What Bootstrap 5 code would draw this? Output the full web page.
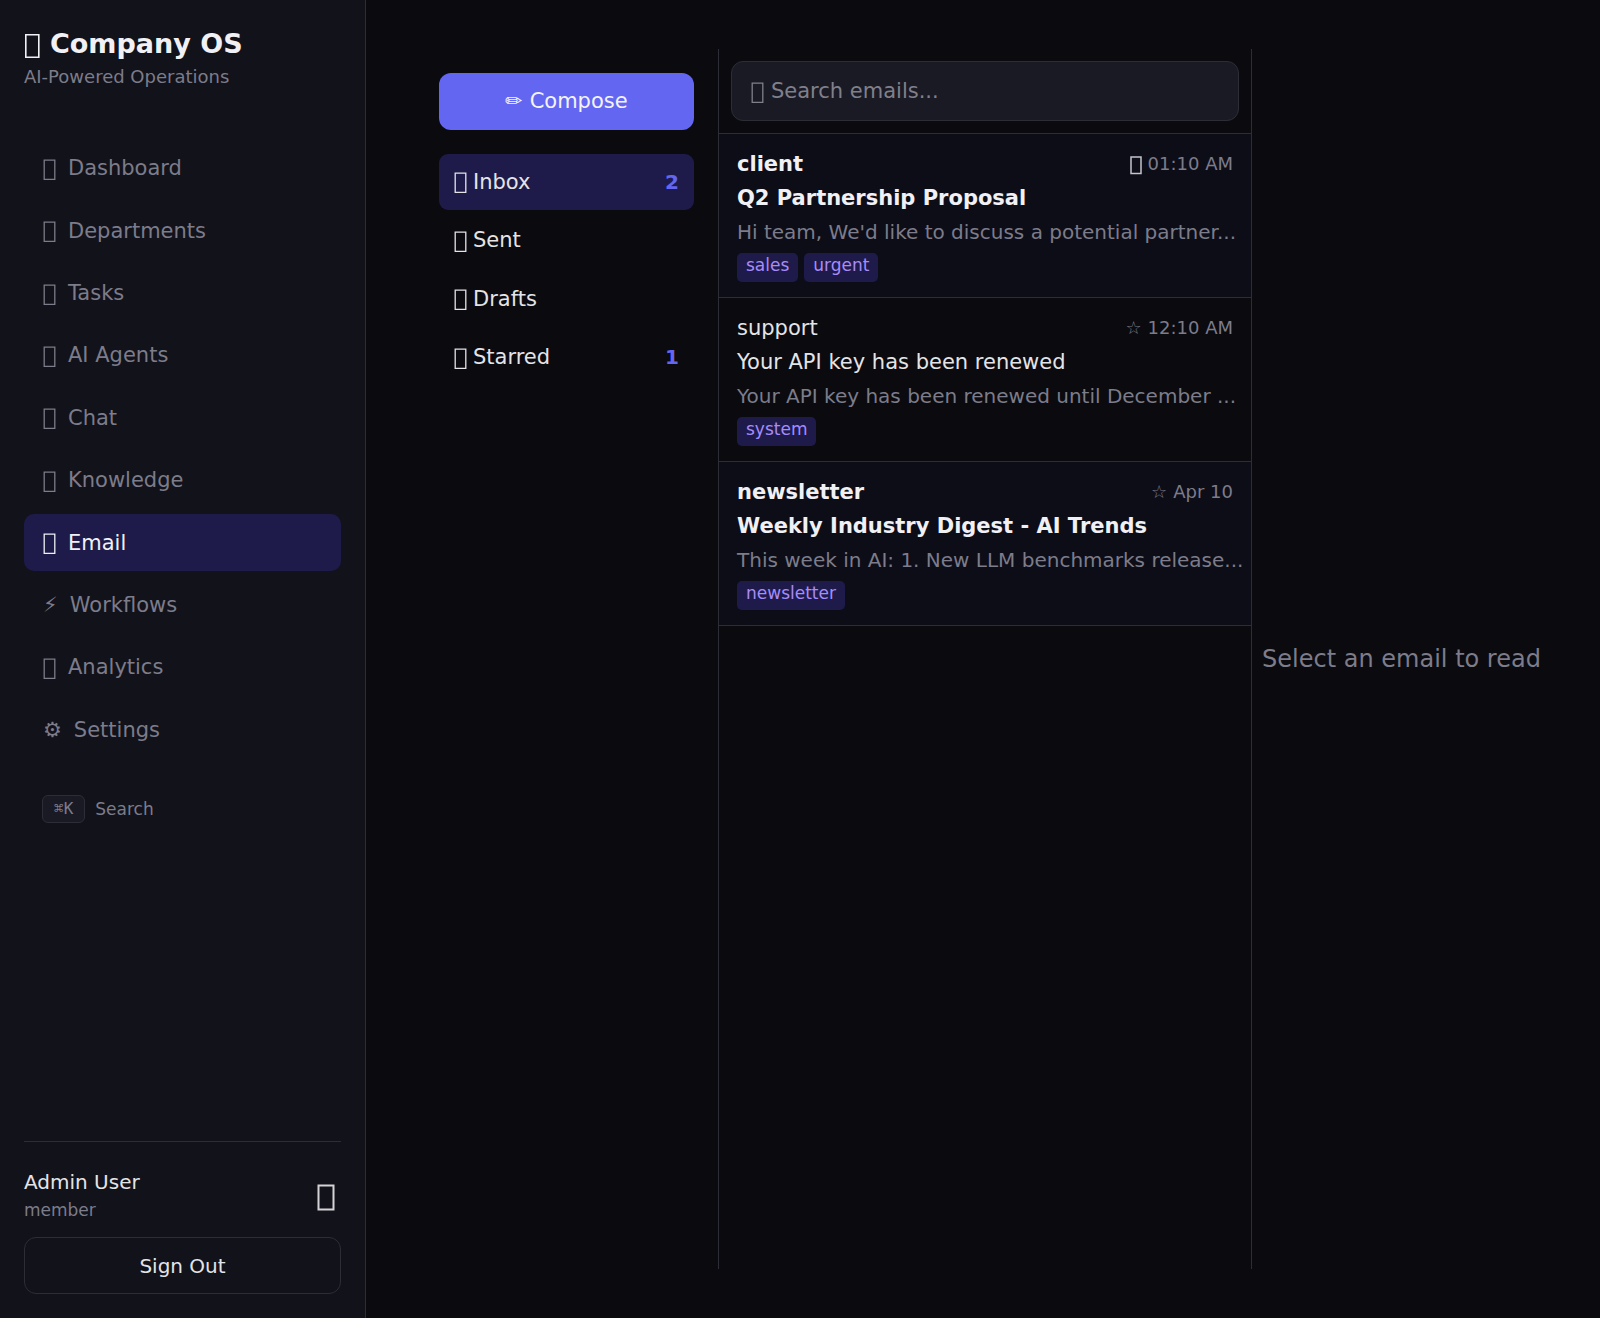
<!DOCTYPE html>
<html lang="en" data-bs-theme="dark">
<head>
<meta charset="utf-8">
<meta name="viewport" content="width=device-width, initial-scale=1">
<title>Company OS – Email</title>
<link href="https://cdn.jsdelivr.net/npm/bootstrap@5.3.0/dist/css/bootstrap.min.css" rel="stylesheet">
<style>
:root {
  --os-bg: #0a0a0f; --os-panel: #12121a; --os-field: #1a1a25; --os-line: #2d2d37;
  --os-text: #e4e4e7; --os-muted: #7c7c8a; --os-accent: #6366f1; --os-active: #1e1b4b;
}
body { background: var(--os-bg); color: var(--os-text); font-family: "DejaVu Sans", sans-serif; font-size: 21px; line-height: 32px; }
a { color: inherit; text-decoration: none; }
.os-muted { color: var(--os-muted); }
.fs-17 { font-size: 17px; }
.fs-18 { font-size: 18px; }
.fs-20 { font-size: 20px; }

.side-panel { width: 366px; flex: none; background: var(--os-panel); border-right: 1px solid var(--os-line); padding: 24px; }
.brand-name { font-size: 27px; line-height: 40px; font-weight: 700; gap: 9px; margin: 0; color: #f0f0f5; }
.brand-tag { line-height: 26px; margin: 0 0 50px; }
.side-nav { gap: 6px; min-height: 618px; }
.side-link { padding: 0 19px; gap: 12px; border-radius: 10px; color: var(--os-muted); }
.side-link.active { background: var(--os-active); color: #f0f0f5; }
.shortcut { margin-top: 37px; padding: 0 18px; gap: 10px; font-size: 17px; line-height: 26px; color: var(--os-muted); background: none; border: 0; }
.shortcut kbd { font: 16px/26px "DejaVu Sans Mono", monospace; background: var(--os-field); color: inherit; border: 1px solid var(--os-line); border-radius: 6px; padding: 0 11px; }
.user-box { border-top: 1px solid var(--os-line); padding-top: 26px; }
.user-box p { line-height: 28px; margin: 0; }
.theme-btn { background: none; border: 0; padding: 0 6px; color: #d4d4d8; }
.btn-out { height: 57px; border: 1px solid var(--os-line); border-radius: 12px; color: var(--os-text); font-size: 20px; margin-top: 13px; }
.btn-out:hover { border-color: var(--os-accent); color: #fff; }

.tofu { flex: none; fill: none; stroke: currentColor; margin-top: 3px; }

.mail-area { padding: 49px; }
.folder-pane { width: 304px; flex: none; padding: 24px; border-right: 1px solid var(--os-line); }
.btn-compose { height: 57px; border-radius: 12px; background: var(--os-accent); color: #f4f4f8; font-size: 21px; margin-bottom: 24px; }
.btn-compose:hover { background: #5558e6; color: #fff; }
.folder-list { gap: 3px; min-height: 231px; }
.folder-link { padding: 0 15px; gap: 6px; border-radius: 9px; }
.folder-link.active { background: var(--os-active); }
.folder-count { color: var(--os-accent); font-weight: 700; font-size: 20px; }

.list-pane { width: 533px; flex: none; border-right: 1px solid var(--os-line); }
.search-row { padding: 12px; border-bottom: 1px solid var(--os-line); }
.search-field { height: 60px; padding: 0 19px; gap: 7px; background: var(--os-field); border: 1px solid var(--os-line); border-radius: 12px; color: #80808a; }
.search-field input { background: none; border: 0; outline: 0; padding: 0; color: var(--os-text); }
.search-field input::placeholder { color: #80808a; opacity: 1; }
.mail-row { display: block; padding: 14px 18px 15px; border-bottom: 1px solid var(--os-line); }
.mail-row.unread { background: #0d0d18; }
.unread .mail-from, .unread .mail-subject { font-weight: 700; color: #f0f0f5; }
.mail-subject { line-height: 36px; }
.mail-time { gap: 6px; }
.mail-tags { gap: 6px; margin-top: 5px; }
.mail-tag { background: var(--os-active); color: #a78bfa; font-size: 17px; line-height: 25px; padding: 0 9px 4px; border-radius: 5px; }
.starred { color: #c4c4cc; }
.reader-pane { font-size: 24px; color: var(--os-muted); }
</style>
</head>
<body>
<svg width="0" height="0" class="position-absolute" aria-hidden="true">
  <symbol id="box" viewBox="0 0 13 22"><path d="M1.2 1.2h10.6v19.2H1.2z" stroke-width="1.3"/></symbol>
</svg>
<div class="d-flex min-vh-100">
  <aside class="side-panel d-flex flex-column">
    <h1 class="brand-name d-flex align-items-center"><svg class="tofu" width="17" height="26" viewBox="0 0 17 26"><path d="M1.8 1.8h13v22.4h-13z" stroke-width="1.6"/></svg>Company OS</h1>
    <p class="brand-tag fs-18 os-muted">AI-Powered Operations</p>
    <nav class="side-nav d-flex flex-column">
      <a href="#" class="side-link flex-fill d-flex align-items-center"><svg class="tofu" width="13" height="22"><use href="#box"/></svg>Dashboard</a>
      <a href="#" class="side-link flex-fill d-flex align-items-center"><svg class="tofu" width="13" height="22"><use href="#box"/></svg>Departments</a>
      <a href="#" class="side-link flex-fill d-flex align-items-center"><svg class="tofu" width="13" height="22"><use href="#box"/></svg>Tasks</a>
      <a href="#" class="side-link flex-fill d-flex align-items-center"><svg class="tofu" width="13" height="22"><use href="#box"/></svg>AI Agents</a>
      <a href="#" class="side-link flex-fill d-flex align-items-center"><svg class="tofu" width="13" height="22"><use href="#box"/></svg>Chat</a>
      <a href="#" class="side-link flex-fill d-flex align-items-center"><svg class="tofu" width="13" height="22"><use href="#box"/></svg>Knowledge</a>
      <a href="#" class="side-link active flex-fill d-flex align-items-center" aria-current="page"><svg class="tofu" width="13" height="22"><use href="#box"/></svg>Email</a>
      <a href="#" class="side-link flex-fill d-flex align-items-center"><span>⚡&#xFE0E;</span>Workflows</a>
      <a href="#" class="side-link flex-fill d-flex align-items-center"><svg class="tofu" width="13" height="22"><use href="#box"/></svg>Analytics</a>
      <a href="#" class="side-link flex-fill d-flex align-items-center"><span>⚙&#xFE0E;</span>Settings</a>
    </nav>
    <button type="button" class="shortcut d-flex align-items-center"><kbd>⌘K</kbd>Search</button>
    <div class="user-box mt-auto">
      <div class="d-flex justify-content-between align-items-center">
        <div>
          <p class="fs-20">Admin User</p>
          <p class="fs-17 os-muted">member</p>
        </div>
        <button type="button" class="theme-btn" aria-label="Toggle theme"><svg class="tofu" width="18" height="28" viewBox="0 0 18 28"><path d="M1.5 1.500h15v24h-15z" stroke-width="2"/></svg></button>
      </div>
      <button type="button" class="btn btn-out w-100">Sign Out</button>
    </div>
  </aside>

  <main class="mail-area flex-grow-1 d-flex">
    <section class="folder-pane">
      <button type="button" class="btn btn-compose w-100">✏&#xFE0E; Compose</button>
      <nav class="folder-list d-flex flex-column">
        <a href="#" class="folder-link active flex-fill d-flex align-items-center"><svg class="tofu" width="13" height="22"><use href="#box"/></svg>Inbox<span class="folder-count ms-auto">2</span></a>
        <a href="#" class="folder-link flex-fill d-flex align-items-center"><svg class="tofu" width="13" height="22"><use href="#box"/></svg>Sent</a>
        <a href="#" class="folder-link flex-fill d-flex align-items-center"><svg class="tofu" width="13" height="22"><use href="#box"/></svg>Drafts</a>
        <a href="#" class="folder-link flex-fill d-flex align-items-center"><svg class="tofu" width="13" height="22"><use href="#box"/></svg>Starred<span class="folder-count ms-auto">1</span></a>
      </nav>
    </section>

    <section class="list-pane">
      <div class="search-row">
        <label class="search-field d-flex align-items-center"><svg class="tofu" width="13" height="22"><use href="#box"/></svg><input type="text" class="flex-grow-1" placeholder="Search emails..." aria-label="Search emails"></label>
      </div>
      <a href="#" class="mail-row unread">
        <div class="d-flex justify-content-between">
          <span class="mail-from">client</span>
          <span class="mail-time fs-18 os-muted d-flex align-items-center"><svg class="tofu starred" width="12" height="19" viewBox="0 0 12 19"><path d="M1 1h10v16.500H1z" stroke-width="1.500"/></svg>01:10 AM</span>
        </div>
        <div class="mail-subject text-nowrap">Q2 Partnership Proposal</div>
        <div class="fs-20 os-muted text-nowrap">Hi team, We'd like to discuss a potential partner...</div>
        <div class="mail-tags d-flex"><span class="mail-tag">sales</span><span class="mail-tag">urgent</span></div>
      </a>
      <a href="#" class="mail-row">
        <div class="d-flex justify-content-between">
          <span class="mail-from">support</span>
          <span class="mail-time fs-18 os-muted d-flex"><span>☆</span>12:10 AM</span>
        </div>
        <div class="mail-subject text-nowrap">Your API key has been renewed</div>
        <div class="fs-20 os-muted text-nowrap">Your API key has been renewed until December ...</div>
        <div class="mail-tags d-flex"><span class="mail-tag">system</span></div>
      </a>
      <a href="#" class="mail-row unread">
        <div class="d-flex justify-content-between">
          <span class="mail-from">newsletter</span>
          <span class="mail-time fs-18 os-muted d-flex"><span>☆</span>Apr 10</span>
        </div>
        <div class="mail-subject text-nowrap">Weekly Industry Digest - AI Trends</div>
        <div class="fs-20 os-muted text-nowrap">This week in AI: 1. New LLM benchmarks release...</div>
        <div class="mail-tags d-flex"><span class="mail-tag">newsletter</span></div>
      </a>
    </section>

    <section class="reader-pane flex-grow-1 d-flex align-items-center justify-content-center">Select an email to read</section>
  </main>
</div>
<script src="https://cdn.jsdelivr.net/npm/bootstrap@5.3.0/dist/js/bootstrap.bundle.min.js"></script>
</body>
</html>
